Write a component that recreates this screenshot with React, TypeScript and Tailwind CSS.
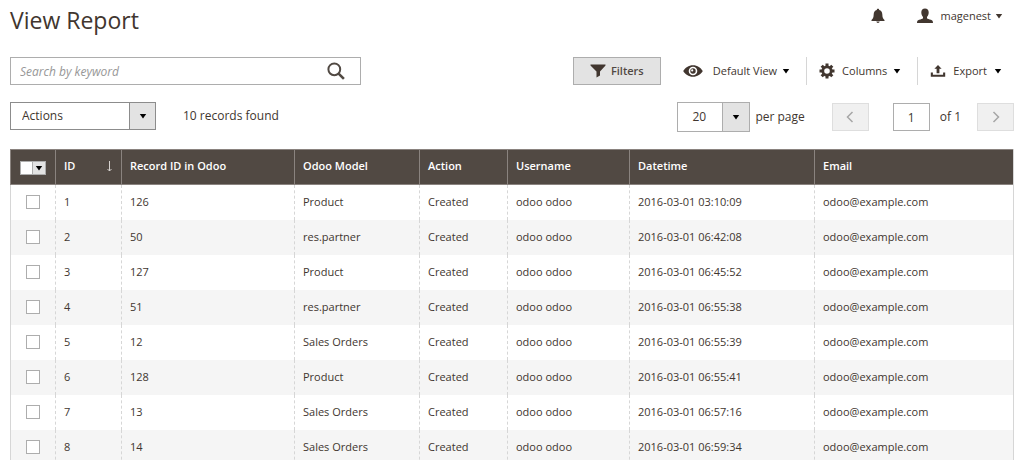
import { useState } from 'react';

interface LogRecord {
  id: number;
  recordId: number;
  model: string;
  datetime: string;
}

const records: LogRecord[] = [
  { id: 1, recordId: 126, model: 'Product', datetime: '2016-03-01 03:10:09' },
  { id: 2, recordId: 50, model: 'res.partner', datetime: '2016-03-01 06:42:08' },
  { id: 3, recordId: 127, model: 'Product', datetime: '2016-03-01 06:45:52' },
  { id: 4, recordId: 51, model: 'res.partner', datetime: '2016-03-01 06:55:38' },
  { id: 5, recordId: 12, model: 'Sales Orders', datetime: '2016-03-01 06:55:39' },
  { id: 6, recordId: 128, model: 'Product', datetime: '2016-03-01 06:55:41' },
  { id: 7, recordId: 13, model: 'Sales Orders', datetime: '2016-03-01 06:57:16' },
  { id: 8, recordId: 14, model: 'Sales Orders', datetime: '2016-03-01 06:59:34' },
];

const Caret = ({ className = 'text-black' }: { className?: string }) => (
  <svg viewBox="0 0 8 5" className={`w-2 h-[5px] shrink-0 ${className}`} fill="currentColor" aria-hidden="true">
    <path d="M.8 0h6.400L4 4.600z" />
  </svg>
);

const BellIcon = () => (
  <svg viewBox="0 0 14 16" className="w-3.5 h-4" fill="currentColor" aria-hidden="true">
    <path d="M7 .8c.8 0 1.200.5 1.200 1.100 2 .5 3 2.200 3.100 4.300.1 3.300.8 4.600 2.200 5.700v1H.5v-1C1.900 10.800 2.600 9.500 2.700 6.200 2.800 4.100 3.800 2.400 5.800 1.900 5.800 1.300 6.200.8 7 .8zM5.300 13.600h3.400c-.2.9-.8 1.400-1.700 1.400s-1.500-.5-1.700-1.400z" />
  </svg>
);

const UserIcon = () => (
  <svg viewBox="0 0 16 16" className="size-4" fill="currentColor" aria-hidden="true">
    <path d="M8 .6c2.300 0 3.700 1.500 3.700 3.700 0 2-.7 3.700-1.700 4.700v1.300c.5.7 2.200 1 3.900 1.500 1.500.4 2.100 1.400 2.100 3.200H0c0-1.800.6-2.800 2.100-3.200 1.700-.5 3.400-.8 3.900-1.500V9C5 8 4.300 6.300 4.300 4.300 4.300 2.100 5.700.6 8 .6z" />
  </svg>
);

const SearchIcon = () => (
  <svg viewBox="0 0 18 18" className="size-[18px]" fill="none" stroke="currentColor" aria-hidden="true">
    <circle cx="7.300" cy="7.300" r="5.900" strokeWidth="2" />
    <path d="M11.600 11.600l5.300 5.300" strokeWidth="2.600" />
  </svg>
);

const FilterIcon = () => (
  <svg viewBox="0 0 16 14" className="w-4 h-3.5" fill="currentColor" aria-hidden="true">
    <path d="M.5.600h15v1L10 7.400v4.200L6.500 13.600V7.400L.5 1.600z" />
  </svg>
);

const EyeIcon = () => (
  <svg viewBox="0 0 20 12" className="w-5 h-3" aria-hidden="true">
    <path fill="currentColor" fillRule="evenodd" d="M10 .2C14.400.2 17.900 2.900 19.800 6c-1.900 3.100-5.400 5.800-9.800 5.800S2.100 9.100.2 6C2.100 2.900 5.600.2 10 .2zm0 1.500a4.300 4.300 0 1 0 0 8.600 4.300 4.300 0 0 0 0-8.600z" />
    <path fill="currentColor" fillRule="evenodd" d="M10 3.300a2.700 2.700 0 1 1 0 5.400 2.700 2.700 0 0 1 0-5.400zm-.8 1a1.100 1.100 0 1 0 0 2.200 1.100 1.100 0 0 0 0-2.200z" />
  </svg>
);

const GearIcon = () => (
  <svg viewBox="0 0 16 16" className="size-4" aria-hidden="true">
    <path fill="none" stroke="currentColor" strokeWidth="3" d="M8 .5v3M8 12.500v3M.5 8h3M12.500 8h3M2.700 2.700l2.100 2.100M11.200 11.200l2.100 2.100M2.700 13.300l2.100-2.100M11.200 4.800l2.100-2.100" />
    <circle cx="8" cy="8" r="4.200" fill="none" stroke="currentColor" strokeWidth="2.800" />
  </svg>
);

const ExportIcon = () => (
  <svg viewBox="0 0 16 14" className="w-4 h-3.5" fill="currentColor" aria-hidden="true">
    <path d="M8 .9l3.600 3.900H9.400v4.400H6.600V4.800H4.400zM.8 8.400h2.100v2.400h10.200V8.400h2.100v4.400H.8z" />
  </svg>
);

const Chevron = ({ d }: { d: string }) => (
  <svg viewBox="0 0 8 12" className="w-2 h-3" fill="none" stroke="#a6a6a6" strokeWidth="1.500" aria-hidden="true">
    <path d={d} />
  </svg>
);

const headerCell = 'h-9 pb-0.5 pl-2 text-left font-semibold border-l border-[#8a837f]';
const bodyCell = 'h-[35px] pb-0.5 pl-2 border-l border-dashed border-[#d6d6d6]';
const toolButton = 'flex h-7 items-center cursor-pointer';
const pagerButton = 'flex h-7 w-[37px] items-center justify-center border border-[#dedede] bg-[#f0f0f0]';

export default function App() {
  const [selected, setSelected] = useState<number[]>([]);

  const toggle = (id: number) => {
    setSelected(selected.includes(id) ? selected.filter((s) => s !== id) : [...selected, id]);
  };

  return (
    <div className="bg-white px-2.5 font-['Open_Sans',sans-serif] text-[11px] leading-4 text-[#41362f]">
      <header className="flex h-[57px] items-start justify-between">
        <h1 className="pt-1 text-[23px] leading-8">View Report</h1>
        <div className="flex items-center pt-2 pr-[11px]">
          <button type="button" aria-label="Notifications">
            <BellIcon />
          </button>
          <button type="button" className="ml-8 flex items-center">
            <UserIcon />
            <span className="ml-[7px] mr-1">magenest</span>
            <Caret className="text-[#41362f]" />
          </button>
        </div>
      </header>

      <div className="flex items-center justify-between">
        <div className="relative w-[351px]">
          <input
            type="text"
            aria-label="Search by keyword"
            placeholder="Search by keyword"
            className="h-7 w-full border border-[#adadad] pl-[9px] pr-10 text-[12px] placeholder:italic placeholder:text-[#979797]"
          />
          <button type="button" aria-label="Search" className="absolute right-4 top-[5px] text-[#514943]">
            <SearchIcon />
          </button>
        </div>
        <div className="flex items-center pr-3">
          <button type="button" className="flex h-7 w-[88px] items-center justify-center gap-[5px] border border-[#adadad] bg-[#e3e3e3] font-semibold text-[#514943]">
            <span className="text-[#41362f]"><FilterIcon /></span>
            Filters
          </button>
          <button type="button" className={`${toolButton} pl-[22px] pr-4`}>
            <EyeIcon />
            <span className="ml-[10px] mr-[5px]">Default View</span>
            <Caret />
          </button>
          <button type="button" className={`${toolButton} border-l border-[#d6d6d6] pl-3 pr-4`}>
            <GearIcon />
            <span className="ml-[7px] mr-[6px]">Columns</span>
            <Caret />
          </button>
          <button type="button" className={`${toolButton} border-l border-[#d6d6d6] pl-3`}>
            <ExportIcon />
            <span className="mx-[7px]">Export</span>
            <Caret />
          </button>
        </div>
      </div>

      <div className="mt-[17px] flex items-start justify-between text-[12px]">
        <div className="flex items-center">
          <div className="relative">
            <select aria-label="Actions" className="h-7 w-[146px] appearance-none border border-[#8c8c8c] bg-white pl-[11px]">
              <option>Actions</option>
            </select>
            <span className="pointer-events-none absolute inset-y-0 right-0 flex w-[27px] items-center justify-center border border-[#8c8c8c] bg-[#e3e3e3]">
              <Caret />
            </span>
          </div>
          <span className="ml-[27px]">10 records found</span>
        </div>
        <div className="flex items-center">
          <label className="flex items-center gap-[5px]">
            <span className="relative">
              <select className="h-[30px] w-[73px] appearance-none border border-[#adadad] bg-white pl-3.5">
                <option>20</option>
              </select>
              <span className="pointer-events-none absolute inset-y-0 right-0 flex w-7 items-center justify-center border border-[#adadad] bg-[#e3e3e3]">
                <Caret />
              </span>
            </span>
            per page
          </label>
          <button type="button" aria-label="Previous page" className={`${pagerButton} ml-[27px]`}>
            <Chevron d="M6.500 1L1.500 6l5 5" />
          </button>
          <input
            type="text"
            aria-label="Page"
            defaultValue="1"
            className="ml-6 mr-2.5 h-7 w-[37px] border border-[#adadad] text-center"
          />
          <span>of 1</span>
          <button type="button" aria-label="Next page" className={`${pagerButton} ml-4`}>
            <Chevron d="M1.500 1l5 5-5 5" />
          </button>
        </div>
      </div>

      <table className="mt-[17px] w-full table-fixed border-separate border-spacing-0 border-r border-[#d6d6d6]">
        <thead className="bg-[#514943] text-white">
          <tr className="[&>th]:border-y">
            <th className={`${headerCell} w-[45px]`}>
              <button type="button" aria-label="Select rows" className="ml-px mt-1 flex h-3.5 w-[26px] border border-[#adadad] bg-white">
                <span className="ml-auto flex h-full w-[13px] items-center justify-center border-l border-[#adadad] bg-[#e3e3e3]">
                  <Caret />
                </span>
              </button>
            </th>
            <th className={`${headerCell} w-[66px]`}>
              <span className="flex items-center justify-between pr-2">
                ID
                <svg viewBox="0 0 7 11" className="w-[7px] h-[11px] text-[#d6d2cf]" fill="none" stroke="currentColor" aria-label="Ascending">
                  <path d="M3.500 0v10M1.500 8l2 2 2-2" />
                </svg>
              </span>
            </th>
            <th className={`${headerCell} w-[173px]`}>Record ID in Odoo</th>
            <th className={`${headerCell} w-[125px]`}>Odoo Model</th>
            <th className={`${headerCell} w-[88px]`}>Action</th>
            <th className={`${headerCell} w-[122px]`}>Username</th>
            <th className={`${headerCell} w-[185px]`}>Datetime</th>
            <th className={headerCell}>Email</th>
          </tr>
        </thead>
        <tbody>
          {records.map((record) => (
            <tr key={record.id} className="even:bg-[#f5f5f5]">
              <td className="h-[35px] border-l border-[#d6d6d6] pb-0.5">
                <input
                  type="checkbox"
                  aria-label={`Select record ${record.id}`}
                  checked={selected.includes(record.id)}
                  onChange={() => toggle(record.id)}
                  className="mx-auto block size-3.5 appearance-none border border-[#adadad] bg-white checked:bg-[#514943]"
                />
              </td>
              <td className={bodyCell}>{record.id}</td>
              <td className={bodyCell}>{record.recordId}</td>
              <td className={bodyCell}>{record.model}</td>
              <td className={bodyCell}>Created</td>
              <td className={bodyCell}>odoo odoo</td>
              <td className={bodyCell}>{record.datetime}</td>
              <td className={bodyCell}>odoo@example.com</td>
            </tr>
          ))}
        </tbody>
      </table>
    </div>
  );
}
